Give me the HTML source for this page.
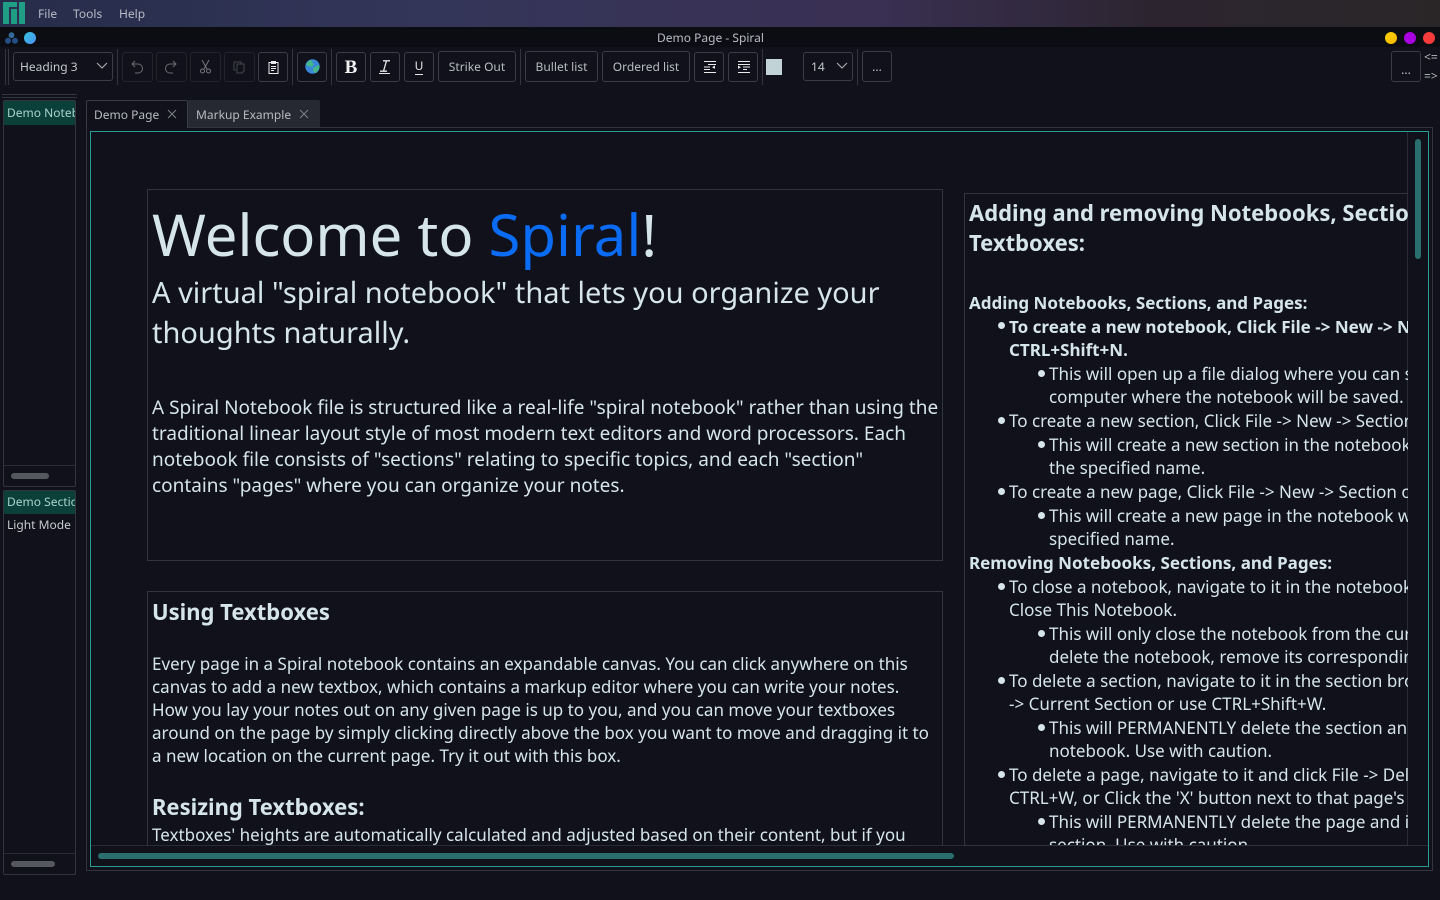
<!DOCTYPE html>
<html><head><meta charset="utf-8"><style>
html,body{margin:0;padding:0;background:#10111a;width:1440px;height:900px;overflow:hidden}
body{font-family:"Noto Sans","Open Sans","DejaVu Sans",sans-serif;position:relative;color:#d5e5ea}
div{box-sizing:border-box}
.a{position:absolute}
.t{position:absolute;white-space:nowrap}
.btn{position:absolute;top:51px;height:31px;border:1px solid #3a3c46;border-radius:3px;color:#b9bdc2;font-size:12px;line-height:29px;text-align:center}
.ic{top:52px;height:30px}
.dis{border-color:#22242c}
.sep{position:absolute;top:49px;height:36px;width:1px;background:#34363f}
.b1 .t{font-size:19px;line-height:26px}
.b2 .t{font-size:17px;line-height:23px}
.r .t{font-size:17px;line-height:23px;margin-top:-1px}
.d{position:absolute;width:7px;height:7px;border-radius:50%;background:#d5e5ea}
.box{position:absolute;border:1px solid #33353e;overflow:hidden}
svg{position:absolute;display:block}
</style></head><body>
<div class="a" style="left:0;top:0;width:1440px;height:27px;background:linear-gradient(90deg,#262c4a 0%,#343659 30%,#3a3054 60%,#2c2530 80%,#2a2628 100%)"></div>
<svg style="left:3px;top:2px" width="22" height="22" viewBox="0 0 22 22"><rect width="22" height="22" fill="#2b3050"/><path d="M0 0h14v5H6v17H0z" fill="#1f9e85"/><rect x="8" y="7" width="6" height="15" fill="#1f9e85"/><rect x="16" y="0" width="6" height="22" fill="#1f9e85"/></svg>
<div class="t" style="left:38px;top:4px;font-size:12px;line-height:19px;color:#b6bbc6">File</div>
<div class="t" style="left:73px;top:4px;font-size:12px;line-height:19px;color:#b6bbc6">Tools</div>
<div class="t" style="left:119px;top:4px;font-size:12px;line-height:19px;color:#b6bbc6">Help</div>

<div class="a" style="left:0;top:27px;width:1440px;height:20px;background:#0c0d13"></div>
<svg style="left:5px;top:32px" width="13" height="12" viewBox="0 0 13 12"><circle cx="6.5" cy="3.2" r="2.9" fill="#35699c"/><circle cx="3" cy="8.8" r="3" fill="#234f85"/><circle cx="10" cy="8.8" r="3" fill="#234f85"/></svg>
<div class="a" style="left:24px;top:32px;width:12px;height:12px;border-radius:50%;background:linear-gradient(135deg,#36c6e0,#4a90f0)"></div>
<div class="t" style="left:657px;top:28px;font-size:12px;line-height:19px;color:#b9bdc2">Demo Page - Spiral</div>
<div class="a" style="left:1385px;top:32px;width:12px;height:12px;border-radius:50%;background:linear-gradient(135deg,#fdd000,#f5b800)"></div>
<div class="a" style="left:1404px;top:32px;width:12px;height:12px;border-radius:50%;background:#a800e0"></div>
<div class="a" style="left:1423px;top:32px;width:12px;height:12px;border-radius:50%;background:#f83c3c"></div>

<!-- toolbar -->
<div class="a" style="left:5px;top:49px;width:1px;height:36px;background:#34363f"></div>
<div class="a" style="left:8px;top:49px;width:1px;height:36px;background:#34363f"></div>
<div class="btn" style="left:13px;top:52px;width:100px;height:29px;line-height:27px;text-align:left;padding-left:6px;color:#c4c8cc">Heading 3</div>
<svg style="left:96px;top:62px" width="12" height="8" viewBox="0 0 12 8"><path d="M1 1l5 5 5-5" fill="none" stroke="#b0b4b8" stroke-width="1"/></svg>
<div class="sep" style="left:117px"></div>
<div class="btn ic dis" style="left:122px;width:31px"></div>
<svg style="left:130px;top:60px" width="14" height="14" viewBox="0 0 14 14"><path d="M5 1L2 4l3 3M2 4h6a4 4 0 0 1 0 9H5" fill="none" stroke="#6a6c72" stroke-width="1"/></svg>
<div class="btn ic dis" style="left:156px;width:31px"></div>
<svg style="left:164px;top:60px" width="14" height="14" viewBox="0 0 14 14"><path d="M9 1l3 3-3 3M12 4H6a4 4 0 0 0 0 9h3" fill="none" stroke="#6a6c72" stroke-width="1"/></svg>
<div class="btn ic dis" style="left:190px;width:31px"></div>
<svg style="left:199px;top:60px" width="13" height="14" viewBox="0 0 13 14"><path d="M3 0l5 9M10 0L5 9" stroke="#77797f" fill="none"/><circle cx="3.5" cy="11" r="2" fill="none" stroke="#77797f"/><circle cx="9.5" cy="11" r="2" fill="none" stroke="#77797f"/></svg>
<div class="btn ic dis" style="left:224px;width:31px"></div>
<svg style="left:233px;top:61px" width="13" height="13" viewBox="0 0 13 13"><path d="M3 9H1V1h7v2M4 3h7v7l-2 2H4z" fill="none" stroke="#44464d"/></svg>
<div class="btn ic" style="left:258px;width:30px"></div>
<svg style="left:268px;top:60px" width="11" height="14" viewBox="0 0 11 14"><path d="M1 2.5h9v11H1z" fill="none" stroke="#e8eaec" stroke-width="1"/><rect x="3" y="1" width="5" height="3" fill="#e8eaec"/><path d="M3 6.5h5M3 8.5h5M3 10.5h3" stroke="#e8eaec"/></svg>
<div class="sep" style="left:292px"></div>
<div class="btn ic" style="left:297px;width:30px"></div>
<svg style="left:305px;top:59px" width="15" height="15" viewBox="0 0 15 15"><circle cx="7.5" cy="7.5" r="7.2" fill="#3a86d8"/><path d="M1 5l4-4 3 1-1 2 2 1-2 3-3-1-2 0zM8 9l6-3 .5 3-3 5-3-1z" fill="#44b78a"/></svg>
<div class="sep" style="left:331px"></div>
<div class="btn ic" style="left:336px;width:30px;font:bold 19px/29px 'Liberation Serif',serif;color:#f2f2f2">B</div>
<div class="btn ic" style="left:370px;width:30px"></div>
<svg style="left:378px;top:60px" width="14" height="14" viewBox="0 0 14 14"><path d="M5 0.8h7M2 11.2h7M8.5 0.8L5.5 11.2" stroke="#e4e6e8" stroke-width="1.3" fill="none"/><path d="M1 13.5h11" stroke="#e4e6e8"/></svg>
<div class="btn ic" style="left:404px;width:30px;font-size:12px;line-height:26px;color:#e4e6e8"><span style="border-bottom:1px solid #e4e6e8">U</span></div>
<div class="btn" style="left:438px;width:78px">Strike Out</div>
<div class="sep" style="left:520px"></div>
<div class="btn" style="left:525px;width:73px">Bullet list</div>
<div class="btn" style="left:602px;width:88px">Ordered list</div>
<div class="btn ic" style="left:694px;width:30px"></div>
<svg style="left:703px;top:61px" width="13" height="12" viewBox="0 0 13 12"><path d="M1 .5h12M5 3.5h8M1 6h6M1 8.5h6M1 11.5h12" stroke="#e8eaec"/><path d="M12 4.5l-3 1.7 3 1.7z" fill="#e8eaec"/></svg>
<div class="btn ic" style="left:728px;width:30px"></div>
<svg style="left:737px;top:61px" width="13" height="12" viewBox="0 0 13 12"><path d="M1 .5h12M1 3.5h12M6 6h7M6 8.5h4M1 11.5h12" stroke="#e8eaec"/><path d="M1 4.5l3 1.7-3 1.7z" fill="#e8eaec"/></svg>
<div class="sep" style="left:762px"></div>
<div class="a" style="left:766px;top:59px;width:16px;height:16px;background:#c2d3d8"></div>
<div class="btn" style="left:803px;top:52px;width:50px;height:29px;line-height:27px;text-align:left;padding-left:7px;color:#c4c8cc">14</div>
<svg style="left:836px;top:62px" width="12" height="8" viewBox="0 0 12 8"><path d="M1 1l5 5 5-5" fill="none" stroke="#b0b4b8" stroke-width="1"/></svg>
<div class="sep" style="left:857px"></div>
<div class="btn" style="left:862px;width:30px">...</div>
<div class="btn" style="left:1391px;width:30px;line-height:35px;font-size:12px">...</div>
<div class="t" style="left:1424px;top:49px;font-size:12px;line-height:16px;color:#b9bdc2">&lt;=</div>
<div class="t" style="left:1424px;top:68px;font-size:12px;line-height:16px;color:#b9bdc2">=&gt;</div>
<div class="a" style="left:2px;top:94px;width:75px;height:1px;background:#34363f"></div>
<div class="a" style="left:2px;top:97px;width:75px;height:1px;background:#34363f"></div>

<!-- notebook panel -->
<div class="box" style="left:3px;top:100px;width:73px;height:387px;border-radius:2px">
  <div class="a" style="left:0;top:0;width:72px;height:24px;background:#0b3f3a"></div>
  <div class="t" style="left:3px;top:2px;font-size:12px;line-height:20px;color:#a9d2cb">Demo Notebook</div>
  <div class="a" style="left:0;top:364px;width:72px;height:1px;background:#2a2c35"></div>
  <div class="a" style="left:7px;top:372px;width:38px;height:6px;border-radius:3px;background:#565860"></div>
</div>
<div class="box" style="left:3px;top:490px;width:73px;height:385px;border-radius:2px">
  <div class="a" style="left:0;top:0;width:72px;height:23px;background:#0b3f3a"></div>
  <div class="t" style="left:3px;top:1px;font-size:12px;line-height:20px;color:#a9d2cb">Demo Section</div>
  <div class="t" style="left:3px;top:24px;font-size:12px;line-height:20px;color:#c8ccd0">Light Mode</div>
  <div class="a" style="left:0;top:362px;width:72px;height:1px;background:#2a2c35"></div>
  <div class="a" style="left:7px;top:370px;width:44px;height:6px;border-radius:3px;background:#565860"></div>
</div>

<!-- tabs -->
<div class="a" style="left:86px;top:127px;width:1347px;height:744px;border:1px solid #33353e"></div>
<div class="a" style="left:86px;top:100px;width:102px;height:28px;background:#10111a;border:1px solid #3a3c46;border-bottom:0;border-radius:2px 2px 0 0"></div>
<div class="t" style="left:94px;top:105px;font-size:12px;line-height:20px;color:#b9bdc2">Demo Page</div>
<svg style="left:167px;top:109px" width="10" height="10" viewBox="0 0 10 10"><path d="M1 1l8 8M9 1l-8 8" stroke="#7d8086"/></svg>
<div class="a" style="left:188px;top:100px;width:132px;height:27px;background:#262832;border-radius:0 2px 0 0"></div>
<div class="t" style="left:196px;top:105px;font-size:12px;line-height:20px;color:#b9bdc2">Markup Example</div>
<svg style="left:299px;top:109px" width="10" height="10" viewBox="0 0 10 10"><path d="M1 1l8 8M9 1l-8 8" stroke="#7d8086"/></svg>

<!-- canvas -->
<div class="a" style="left:90px;top:131px;width:1339px;height:736px;border:1px solid #2b9c94"></div>
<div class="a" style="left:1407px;top:132px;width:1px;height:714px;background:#2a2c35"></div>
<div class="a" style="left:91px;top:845px;width:1337px;height:1px;background:#2a2c35"></div>
<div class="a" style="left:1415px;top:139px;width:6px;height:120px;border-radius:3px;background:#2a6f6e"></div>
<div class="a" style="left:98px;top:853px;width:856px;height:6px;border-radius:3px;background:#2a6f6e"></div>

<!-- box 1 -->
<div class="box b1" style="left:147px;top:189px;width:796px;height:372px">
  <div class="t" style="left:4px;top:5px;font-size:58px;line-height:78px">Welcome to <span style="color:#0a6cf5">Spiral</span>!</div>
  <div class="t" style="left:4px;top:82px;font-size:29px;line-height:42px">A virtual "spiral notebook" that lets you organize your</div>
  <div class="t" style="left:4px;top:122px;font-size:29px;line-height:42px">thoughts naturally.</div>
  <div class="t" style="left:4px;top:204px">A Spiral Notebook file is structured like a real-life "spiral notebook" rather than using the</div>
  <div class="t" style="left:4px;top:230px">traditional linear layout style of most modern text editors and word processors. Each</div>
  <div class="t" style="left:4px;top:256px">notebook file consists of "sections" relating to specific topics, and each "section"</div>
  <div class="t" style="left:4px;top:282px">contains "pages" where you can organize your notes.</div>
</div>

<!-- box 2 -->
<div class="box b2" style="left:147px;top:591px;width:796px;height:255px;border-bottom:0">
  <div class="t" style="left:4px;top:4px;font-size:22px;line-height:32px;font-weight:700">Using Textboxes</div>
  <div class="t" style="left:4px;top:60px">Every page in a Spiral notebook contains an expandable canvas. You can click anywhere on this</div>
  <div class="t" style="left:4px;top:83px">canvas to add a new textbox, which contains a markup editor where you can write your notes.</div>
  <div class="t" style="left:4px;top:106px">How you lay your notes out on any given page is up to you, and you can move your textboxes</div>
  <div class="t" style="left:4px;top:129px">around on the page by simply clicking directly above the box you want to move and dragging it to</div>
  <div class="t" style="left:4px;top:152px">a new location on the current page. Try it out with this box.</div>
  <div class="t" style="left:4px;top:199px;font-size:22px;line-height:32px;font-weight:700">Resizing Textboxes:</div>
  <div class="t" style="left:4px;top:231px">Textboxes' heights are automatically calculated and adjusted based on their content, but if you</div>
</div>

<!-- right box -->
<div class="box r" style="left:964px;top:193px;width:444px;height:653px;border-right:0">
  <div class="t" style="left:4px;top:3px;margin-top:0;font-size:22px;line-height:32px;font-weight:700">Adding and removing Notebooks, Sections, Pages and</div>
  <div class="t" style="left:4px;top:33px;margin-top:0;font-size:22px;line-height:32px;font-weight:700">Textboxes:</div>
  <div class="t" style="left:4px;top:97px;margin-top:0;font-weight:700">Adding Notebooks, Sections, and Pages:</div>
  <div class="d" style="left:33px;top:128px"></div>
  <div class="t" style="left:44px;top:121px;margin-top:0;font-weight:700">To create a new notebook, Click File -&gt; New -&gt; Notebook or use</div>
  <div class="t" style="left:44px;top:144px;margin-top:0;font-weight:700">CTRL+Shift+N.</div>
  <div class="d" style="left:73px;top:176px"></div><div class="t" style="left:84px;top:169px">This will open up a file dialog where you can select a folder on your</div>
  <div class="t" style="left:84px;top:192px">computer where the notebook will be saved.</div>
  <div class="d" style="left:33px;top:223px"></div><div class="t" style="left:44px;top:216px">To create a new section, Click File -&gt; New -&gt; Section or use</div>
  <div class="d" style="left:73px;top:247px"></div><div class="t" style="left:84px;top:240px">This will create a new section in the notebook with</div>
  <div class="t" style="left:84px;top:263px">the specified name.</div>
  <div class="d" style="left:33px;top:294px"></div><div class="t" style="left:44px;top:287px">To create a new page, Click File -&gt; New -&gt; Section or use</div>
  <div class="d" style="left:73px;top:318px"></div><div class="t" style="left:84px;top:311px">This will create a new page in the notebook with the</div>
  <div class="t" style="left:84px;top:334px">specified name.</div>
  <div class="t" style="left:4px;top:358px;font-weight:700">Removing Notebooks, Sections, and Pages:</div>
  <div class="d" style="left:33px;top:389px"></div><div class="t" style="left:44px;top:382px">To close a notebook, navigate to it in the notebook browser and click</div>
  <div class="t" style="left:44px;top:405px">Close This Notebook.</div>
  <div class="d" style="left:73px;top:436px"></div><div class="t" style="left:84px;top:429px">This will only close the notebook from the current session. To</div>
  <div class="t" style="left:84px;top:452px">delete the notebook, remove its corresponding folder.</div>
  <div class="d" style="left:33px;top:483px"></div><div class="t" style="left:44px;top:476px">To delete a section, navigate to it in the section browser and click File</div>
  <div class="t" style="left:44px;top:499px">-&gt; Current Section or use CTRL+Shift+W.</div>
  <div class="d" style="left:73px;top:530px"></div><div class="t" style="left:84px;top:523px">This will PERMANENTLY delete the section and its pages from the</div>
  <div class="t" style="left:84px;top:546px">notebook. Use with caution.</div>
  <div class="d" style="left:33px;top:577px"></div><div class="t" style="left:44px;top:570px">To delete a page, navigate to it and click File -&gt; Delete Page, use</div>
  <div class="t" style="left:44px;top:593px">CTRL+W, or Click the 'X' button next to that page's tab.</div>
  <div class="d" style="left:73px;top:624px"></div><div class="t" style="left:84px;top:617px">This will PERMANENTLY delete the page and its contents from the</div>
  <div class="t" style="left:84px;top:640px">section. Use with caution.</div>
</div>
</body></html>
